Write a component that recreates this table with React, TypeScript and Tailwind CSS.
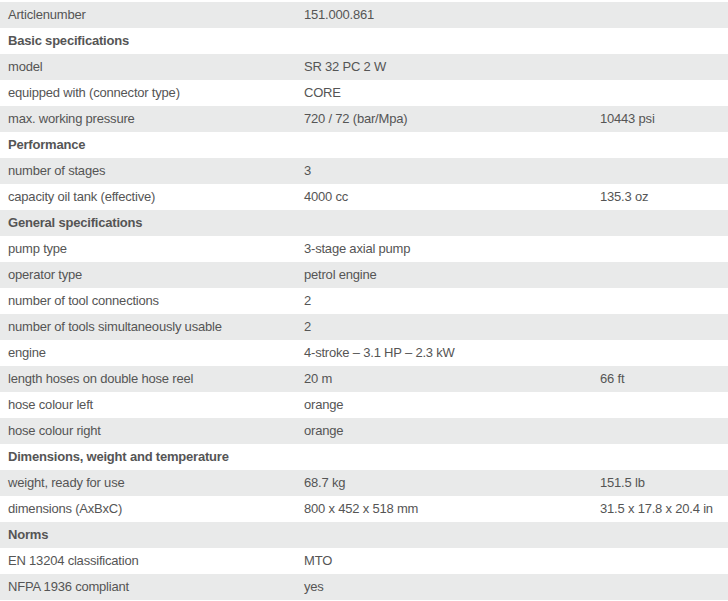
const rows: { label: string; v1?: string; v2?: string; head?: boolean }[] = [
  { label: 'Articlenumber', v1: '151.000.861' },
  { label: 'Basic specifications', head: true },
  { label: 'model', v1: 'SR 32 PC 2 W' },
  { label: 'equipped with (connector type)', v1: 'CORE' },
  { label: 'max. working pressure', v1: '720 / 72 (bar/Mpa)', v2: '10443 psi' },
  { label: 'Performance', head: true },
  { label: 'number of stages', v1: '3' },
  { label: 'capacity oil tank (effective)', v1: '4000 cc', v2: '135.3 oz' },
  { label: 'General specifications', head: true },
  { label: 'pump type', v1: '3-stage axial pump' },
  { label: 'operator type', v1: 'petrol engine' },
  { label: 'number of tool connections', v1: '2' },
  { label: 'number of tools simultaneously usable', v1: '2' },
  { label: 'engine', v1: '4-stroke – 3.1 HP – 2.3 kW' },
  { label: 'length hoses on double hose reel', v1: '20 m', v2: '66 ft' },
  { label: 'hose colour left', v1: 'orange' },
  { label: 'hose colour right', v1: 'orange' },
  { label: 'Dimensions, weight and temperature', head: true },
  { label: 'weight, ready for use', v1: '68.7 kg', v2: '151.5 lb' },
  { label: 'dimensions (AxBxC)', v1: '800 x 452 x 518 mm', v2: '31.5 x 17.8 x 20.4 in' },
  { label: 'Norms', head: true },
  { label: 'EN 13204 classification', v1: 'MTO' },
  { label: 'NFPA 1936 compliant', v1: 'yes' },
];

export default function App() {
  return (
    <div className="w-[728px] pt-[2px] bg-white text-[13px] tracking-[-0.2px] text-[#555555]" style={{ fontFamily: '"Liberation Sans", Arial, sans-serif' }}>
      {rows.map((r, i) => (
        <div
          key={i}
          className={`grid grid-cols-[296px_296px_136px] h-[26px] items-center ${i % 2 === 0 ? 'bg-[#e9eaea]' : 'bg-white'}`}
        >
          <div className={`pl-2 whitespace-nowrap ${r.head ? 'font-bold' : ''}`}>{r.label}</div>
          <div className="pl-2 whitespace-nowrap">{r.v1}</div>
          <div className="pl-2 whitespace-nowrap">{r.v2}</div>
        </div>
      ))}
    </div>
  );
}
